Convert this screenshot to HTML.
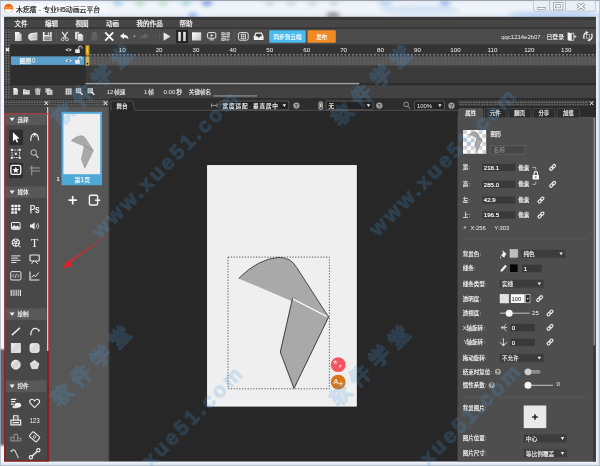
<!DOCTYPE html>
<html><head><meta charset="utf-8"><title>Mugeda</title>
<style>
html,body{margin:0;padding:0;background:#eef3f9;}
body{width:600px;height:466px;overflow:hidden;font-family:"Liberation Sans","Noto Sans CJK SC",sans-serif;}
svg{display:block;font-family:"Liberation Sans","Noto Sans CJK SC",sans-serif;filter:blur(0.45px);}
</style></head><body>
<svg width="600" height="466" viewBox="0 0 600 466">
<defs>
<linearGradient id="gTitle" x1="0" y1="0" x2="0" y2="1">
 <stop offset="0" stop-color="#e2eaf5"/><stop offset="0.3" stop-color="#f1f5fb"/><stop offset="0.75" stop-color="#eef3f9"/><stop offset="1" stop-color="#e0e8f2"/>
</linearGradient>
<linearGradient id="gLeft" x1="0" y1="0" x2="0" y2="1">
 <stop offset="0" stop-color="#f4f7fb"/><stop offset="0.737" stop-color="#f2f6fb"/><stop offset="0.743" stop-color="#56626f"/><stop offset="0.95" stop-color="#5a6673"/><stop offset="0.958" stop-color="#f0f4f9"/><stop offset="1" stop-color="#f4f7fb"/>
</linearGradient>
<linearGradient id="gIcon" x1="0" y1="0" x2="1" y2="1">
 <stop offset="0" stop-color="#ffffff"/><stop offset="1" stop-color="#bdbdbd"/>
</linearGradient>
<linearGradient id="gIcon2" x1="0" y1="0" x2="1" y2="1">
 <stop offset="0" stop-color="#f4f4f4"/><stop offset="0.5" stop-color="#d4d4d4"/><stop offset="1" stop-color="#e6e6e6"/>
</linearGradient>
<pattern id="pDots" width="2.6" height="2.6" patternUnits="userSpaceOnUse">
 <rect width="2.6" height="2.6" fill="#3a3a3a"/><rect x="0.3" y="0.3" width="1.3" height="1.3" fill="#858585"/>
</pattern>
<pattern id="pFrames" width="3.69" height="10" patternUnits="userSpaceOnUse" x="85.3">
 <rect width="3.69" height="10" fill="#5b5b5b"/><rect x="0" y="0" width="0.8" height="10" fill="#4f4f4f"/>
</pattern>
<pattern id="pRuler" width="3.69" height="1.2" patternUnits="userSpaceOnUse" x="85.3">
 <rect x="1.1" y="0.1" width="1.5" height="1" fill="#d2d2d2"/>
</pattern>
<pattern id="pChk" width="7.74" height="7.94" patternUnits="userSpaceOnUse" x="463" y="130">
 <rect width="7.74" height="7.94" fill="#ffffff"/><rect width="3.87" height="3.97" fill="#d2d2d2"/><rect x="3.87" y="3.97" width="3.87" height="3.97" fill="#d2d2d2"/>
</pattern>
<pattern id="pChk2" width="2.4" height="2.4" patternUnits="userSpaceOnUse">
 <rect width="2.4" height="2.4" fill="#ffffff"/><rect width="1.2" height="1.2" fill="#c4c4c4"/><rect x="1.2" y="1.2" width="1.2" height="1.2" fill="#c4c4c4"/>
</pattern>
<filter id="fBlur" x="-5%" y="-5%" width="110%" height="110%"><feGaussianBlur stdDeviation="0.35"/></filter>
<filter id="fBlur2" x="-20%" y="-20%" width="140%" height="140%"><feGaussianBlur stdDeviation="2.2"/></filter>
</defs>
<rect x="0" y="0" width="600" height="466" fill="#eef3f9"/>
<rect x="0" y="0" width="600" height="17" fill="url(#gTitle)"/>
<g filter="url(#fBlur2)" opacity="0.6"><ellipse cx="118" cy="3" rx="5" ry="2.4" fill="#6fb0da"/><ellipse cx="140" cy="3" rx="5" ry="2.4" fill="#8fca9a"/><ellipse cx="163" cy="3" rx="5" ry="2.4" fill="#9fd3a5"/><ellipse cx="186" cy="3" rx="5" ry="2.4" fill="#7fc0c8"/><ellipse cx="207" cy="3.2" rx="5.5" ry="2.6" fill="#2f66cc"/><ellipse cx="193" cy="15.4" rx="4.5" ry="2.2" fill="#3f78e0"/><ellipse cx="333" cy="15" rx="7" ry="2.6" fill="#3a3a3a"/><ellipse cx="270" cy="3" rx="5" ry="2.2" fill="#b5bec9"/><ellipse cx="291" cy="3" rx="5" ry="2.2" fill="#b5bec9"/><ellipse cx="312" cy="3" rx="5" ry="2.2" fill="#b5bec9"/><ellipse cx="334" cy="3" rx="5" ry="2.2" fill="#b5bec9"/><ellipse cx="385" cy="3" rx="7" ry="2.6" fill="#8db9e8"/><ellipse cx="445" cy="3" rx="6" ry="2.6" fill="#4f8fe0"/><ellipse cx="420" cy="10" rx="40" ry="5" fill="#c4d8ef"/><ellipse cx="555" cy="14.6" rx="48" ry="3.2" fill="#94bdf0"/><ellipse cx="58" cy="9" rx="50" ry="5" fill="#ffffff"/></g>
<rect x="0" y="17" width="4.2" height="449" fill="url(#gLeft)"/>
<rect x="596" y="17" width="4" height="449" fill="#eaf0f7"/>
<rect x="0" y="461.3" width="600" height="4.7" fill="#eef3f9"/>
<rect x="597.6" y="17" width="2.4" height="449" fill="#d5e3f3"/>
<rect x="0" y="463.4" width="600" height="2.6" fill="#dbe7f4"/>
<rect x="0" y="0" width="600" height="0.8" fill="#8d9299"/>
<rect x="0" y="0" width="0.7" height="466" fill="#aab0b8"/>
<rect x="599.3" y="0" width="0.7" height="466" fill="#aab0b8"/>
<rect x="0" y="465.3" width="600" height="0.7" fill="#aab0b8"/>
<rect x="4.2" y="16.9" width="591.8" height="444.4" fill="#3c3c3c"/>
<rect x="4.2" y="16.9" width="591.8" height="3.1" fill="#3a3a3a"/>
<rect x="4.2" y="20" width="591.8" height="7.6" fill="#464646"/>
<rect x="4.2" y="27.6" width="591.8" height="1.3" fill="#343434"/>
<rect x="4.2" y="28.9" width="591.8" height="15.7" fill="#4c4c4c"/>
<rect x="4.2" y="44.6" width="591.8" height="11.4" fill="#343434"/>
<rect x="4.2" y="56" width="591.8" height="29" fill="#3a3a3a"/>
<rect x="4.2" y="85" width="591.8" height="14.4" fill="#424242"/>
<rect x="4.2" y="99.4" width="591.8" height="0.9" fill="#2c2c2c"/>
<circle cx="8.6" cy="8.2" r="4.5" fill="#f26a12"/>
<path d="M4.7 8.8 Q8.6 9.9 12.5 8.7 Q12.1 12.6 8.6 12.9 Q5.1 12.6 4.7 8.8Z" fill="#ffffff"/>
<path d="M5 7.6 Q8.6 8.5 12.2 7.4" fill="none" stroke="#ffd0a8" stroke-width="0.55"/>
<text x="16" y="11.78" font-size="6.9" fill="#1a1a1a" stroke="#1a1a1a" stroke-width="0.18">木疙瘩</text>
<text x="38.77" y="11.78" font-size="6.9" fill="#1a1a1a" stroke="#1a1a1a" stroke-width="0.11">-</text>
<text x="43.23" y="11.78" font-size="6.9" fill="#1a1a1a" stroke="#1a1a1a" stroke-width="0.18">专业H5动画云平台</text>
<path d="M533.5 0.8 V9.5 Q533.5 11.2 535.2 11.2 H547.8 Q549.5 11.2 549.5 9.5 V0.8" fill="#eaf0f7" stroke="#a3adbb" stroke-width="0.6" opacity="0.9"/>
<path d="M549.5 0.8 V9.5 Q549.5 11.2 551.2 11.2 H563.8 Q565.5 11.2 565.5 9.5 V0.8" fill="#eaf0f7" stroke="#a3adbb" stroke-width="0.6" opacity="0.9"/>
<path d="M565.5 0.8 V9.5 Q565.5 11.2 567.2 11.2 H593.8 Q595.5 11.2 595.5 9.5 V0.8" fill="#eaf0f7" stroke="#a3adbb" stroke-width="0.6" opacity="0.9"/>
<rect x="537.8" y="7.4" width="7.5" height="2.2" fill="#fdfdfd" stroke="#6a7380" stroke-width="0.55"/>
<rect x="554.3" y="3.7" width="7.6" height="5.2" fill="none" stroke="#6a7380" stroke-width="2.5"/>
<rect x="554.3" y="3.7" width="7.6" height="5.2" fill="none" stroke="#fdfdfd" stroke-width="1.5"/>
<path d="M577.5 3.6 L584.5 9.4 M584.5 3.6 L577.5 9.4" fill="none" stroke="#6a7380" stroke-width="2.8"/>
<path d="M577.5 3.6 L584.5 9.4 M584.5 3.6 L577.5 9.4" fill="none" stroke="#fdfdfd" stroke-width="1.7"/>
<text x="14.4" y="25.76" font-size="6.55" fill="#f2f2f2" stroke="#f2f2f2" stroke-width="0.23">文件</text>
<text x="45" y="25.76" font-size="6.55" fill="#f2f2f2" stroke="#f2f2f2" stroke-width="0.23">编辑</text>
<text x="75.5" y="25.76" font-size="6.55" fill="#f2f2f2" stroke="#f2f2f2" stroke-width="0.23">视图</text>
<text x="106" y="25.76" font-size="6.55" fill="#f2f2f2" stroke="#f2f2f2" stroke-width="0.23">动画</text>
<text x="136.5" y="25.76" font-size="6.55" fill="#f2f2f2" stroke="#f2f2f2" stroke-width="0.23">我的作品</text>
<text x="179.5" y="25.76" font-size="6.55" fill="#f2f2f2" stroke="#f2f2f2" stroke-width="0.23">帮助</text>
<rect x="4.6" y="29.5" width="5.4" height="68.5" fill="url(#pDots)"/>
<path d="M15 32 H19.3 L21.6 34.3 V41 H15Z" fill="url(#gIcon)"/>
<path d="M19.3 32 V34.3 H21.6Z" fill="#9a9a9a"/>
<path d="M28.3 35 L30.5 33.2 L37.4 32.2 V40.2 L30.4 40.8 L28.3 38.4Z" fill="url(#gIcon)"/>
<path d="M30.6 35.2 H37.4 M30.6 37.4 H37.4" fill="none" stroke="#8a8a8a" stroke-width="0.5"/>
<path d="M42.9 32.1 H51.8 V41 H42.9Z" fill="url(#gIcon)"/>
<rect x="44.6" y="32.1" width="5.4" height="2.9" fill="#555555"/>
<rect x="47.9" y="32.5" width="1.2" height="2.1" fill="#e8e8e8"/>
<rect x="44.3" y="36.6" width="6.1" height="3.6" fill="#6a6a6a"/>
<path d="M44.3 37.8 H50.4 M44.3 39 H50.4" fill="none" stroke="#e0e0e0" stroke-width="0.5"/>
<rect x="56.2" y="31" width="0.6" height="11" fill="#5e5e5e"/>
<path d="M62 31.8 L66.2 38.2 M67.6 31.8 L63.4 38.2" fill="none" stroke="#e4e4e4" stroke-width="1.2"/>
<circle cx="62.7" cy="39.3" r="1.4" fill="none" stroke="#d8d8d8" stroke-width="0.9"/>
<circle cx="66.9" cy="39.3" r="1.4" fill="none" stroke="#d8d8d8" stroke-width="0.9"/>
<path d="M75 31.8 H79.2 V39.2 H75Z" fill="#d9d9d9"/>
<path d="M77.6 33.4 H81.4 L83.4 35.4 V41 H77.6Z" fill="url(#gIcon)" stroke="#4a4a4a" stroke-width="0.5"/>
<rect x="91.5" y="33" width="5.8" height="7.8" fill="#5f5f5f" rx="0.6"/>
<rect x="93" y="32" width="2.8" height="1.8" fill="#6a6a6a" rx="0.4"/>
<path d="M105.2 32.3 L113.2 40.6 M113.2 32.3 L105.2 40.6" fill="none" stroke="#f8f8f8" stroke-width="1.8"/>
<path d="M120 36 L124 32.9 V34.8 Q128.2 35 128.4 39.2 Q126.6 37.2 124 37.4 V39.2Z" fill="#f2f2f2"/>
<path d="M133.3 35.8 H135.7 L134.5 37.3Z" fill="#c8c8c8"/>
<path d="M148.4 36 L144.4 32.9 V34.8 Q140.2 35 140 39.2 Q141.8 37.2 144.4 37.4 V39.2Z" fill="#636363"/>
<path d="M153.9 35.8 H156.1 L155 37.3Z" fill="#6a6a6a"/>
<rect x="159" y="31" width="0.6" height="11" fill="#5e5e5e"/>
<path d="M163.6 32.4 L170.8 36.6 L163.6 40.8Z" fill="url(#gIcon)"/>
<rect x="176" y="29.8" width="12" height="13.4" fill="#232323" rx="0.8"/>
<rect x="178.3" y="31.9" width="2.6" height="9.2" fill="url(#gIcon)"/>
<rect x="183.2" y="31.9" width="2.6" height="9.2" fill="url(#gIcon)"/>
<rect x="192" y="32.3" width="9.2" height="8.2" fill="url(#gIcon)"/>
<rect x="207.6" y="32.6" width="8.2" height="5.6" fill="none" rx="1" stroke="#e6e6e6" stroke-width="1"/>
<path d="M210.6 33.9 L213.4 35.4 L210.6 36.9Z" fill="#e6e6e6"/>
<path d="M211.7 38.4 V39.6 M209.3 39.9 H214.1" fill="none" stroke="#dcdcdc" stroke-width="0.9"/>
<rect x="221.4" y="32.3" width="3.2" height="3.2" fill="#dedede"/>
<rect x="222.4" y="33.3" width="1.2" height="1.2" fill="#4a4a4a"/>
<rect x="226.6" y="32.3" width="3.2" height="3.2" fill="#dedede"/>
<rect x="227.6" y="33.3" width="1.2" height="1.2" fill="#4a4a4a"/>
<rect x="221.4" y="37.6" width="3.2" height="3.2" fill="#dedede"/>
<rect x="222.4" y="38.6" width="1.2" height="1.2" fill="#4a4a4a"/>
<path d="M225.3 32.5 V35.2 M221.6 36.5 H229.6 M226.6 37.8 H229.6 M227.6 38.8 V40.8 M225.6 39.8 H229.8 M225.4 36.2 V40.6" fill="none" stroke="#cfcfcf" stroke-width="0.8"/>
<rect x="234.3" y="31" width="0.6" height="11" fill="#5e5e5e"/>
<rect x="238.4" y="32.6" width="9.8" height="7.6" fill="none" rx="1.8" stroke="#e4e4e4" stroke-width="1"/>
<rect x="241.3" y="34.3" width="4.2" height="4.4" fill="none" stroke="#e4e4e4" stroke-width="0.8"/>
<path d="M243.4 34.3 V38.7 M241.3 36.4 H245.5" fill="none" stroke="#dcdcdc" stroke-width="0.6"/>
<path d="M253.8 36.4 L255.6 32.6 H261.8 L263.6 36.4 V40 H253.8Z" fill="#efefef"/>
<path d="M255.4 36.2 L256.4 33.8 H261 L262 36.2 H260.2 L259.4 37.6 H258 L257.2 36.2Z" fill="#3a3a3a"/>
<rect x="269.2" y="30.2" width="36.6" height="12.6" fill="#4ab9ee" rx="1.3"/>
<text x="273.5" y="38.52" font-size="5.6" fill="#ffffff" stroke="#ffffff" stroke-width="0.115">同步到云端</text>
<rect x="307.5" y="30.2" width="28.3" height="12.6" fill="#f28a24" rx="1.3"/>
<text x="315.9" y="38.55" font-size="5.7" fill="#ffffff" stroke="#ffffff" stroke-width="0.115">发布</text>
<text x="501.3" y="38.74" font-size="5.95" fill="#f0f0f0" text-anchor="start">qqc1214e2b07</text>
<text x="541.8" y="38.6" font-size="6.1" fill="#d0d0d0" text-anchor="start">&#183;</text>
<text x="546.5" y="38.61" font-size="5.85" fill="#f0f0f0" stroke="#f0f0f0" stroke-width="0.138">已登录</text>
<path d="M567.6 32.3 L571.4 33.2 V41 L567.6 40.2Z" fill="#f2f2f2"/>
<rect x="571.4" y="33.2" width="2.4" height="7" fill="none" stroke="#e0e0e0" stroke-width="0.7"/>
<path d="M574.4 35 L576.6 36.6 L574.4 38.2Z" fill="#f2f2f2"/>
<g fill="none" stroke="#f0f0f0" stroke-width="1.35"><path d="M584.2 38.8 A4.7 4.7 0 0 1 586.6 32.4"/><path d="M591.6 33.6 A4.7 4.7 0 0 1 589.2 40.2"/></g>
<path d="M585.6 31 L588.6 32.2 L586.2 34.2Z" fill="#ececec"/>
<path d="M590.2 41.6 L587.2 40.4 L589.6 38.4Z" fill="#ececec"/>
<rect x="586.4" y="34.6" width="3.2" height="3.6" fill="none" stroke="#e0e0e0" stroke-width="0.6"/>
<rect x="10.4" y="44.6" width="74.2" height="40.4" fill="#2e2e2e"/>
<path d="M5.9 48 L9.1 51.3 M9.1 48 L5.9 51.3" fill="none" stroke="#f6f6f6" stroke-width="1.25"/>
<path d="M65.19999999999999 49.8 Q68.6 46.8 72.0 49.8 Q68.6 52.8 65.19999999999999 49.8Z" fill="#c4c4c4"/>
<circle cx="68.6" cy="49.8" r="1.1" fill="#555555"/>
<rect x="75.2" y="49.2" width="4.6" height="3.8" fill="#e8e8e8" rx="0.4"/>
<path d="M78.60000000000001 49.2 V47.800000000000004 A1.7 1.7 0 0 1 82.0 47.800000000000004 V48.6" fill="none" stroke="#e8e8e8" stroke-width="0.9"/>
<rect x="11" y="56.4" width="73.6" height="9" fill="#5c9fca"/>
<rect x="11" y="65" width="73.6" height="0.8" fill="#2e2e2e" stroke-dasharray="1.6 1.4"/>
<line x1="11" y1="65.4" x2="84.6" y2="65.4" stroke="#222222" stroke-width="0.8" stroke-dasharray="1.7 1.5"/>
<text x="19.4" y="63.1" font-size="6.1" fill="#f8f8f8" stroke="#f8f8f8" stroke-width="0.16">图层</text>
<text x="31.9" y="63.17" font-size="6.3" fill="#f4f4f4" text-anchor="start">0</text>
<path d="M65.19999999999999 60.6 Q68.6 57.6 72.0 60.6 Q68.6 63.6 65.19999999999999 60.6Z" fill="#d6e4ee"/>
<circle cx="68.6" cy="60.6" r="1.1" fill="#555555"/>
<rect x="75.2" y="60" width="4.6" height="3.8" fill="#e6eef4" rx="0.4"/>
<path d="M78.60000000000001 60 V58.6 A1.7 1.7 0 0 1 82.0 58.6 V59.4" fill="none" stroke="#e6eef4" stroke-width="0.9"/>
<rect x="84.6" y="44.2" width="0.9" height="41" fill="#262626"/>
<text x="122.2" y="52.03" font-size="6.2" fill="#f2f2f2" text-anchor="middle">10</text>
<text x="159.1" y="52.03" font-size="6.2" fill="#f2f2f2" text-anchor="middle">20</text>
<text x="196" y="52.03" font-size="6.2" fill="#f2f2f2" text-anchor="middle">30</text>
<text x="232.9" y="52.03" font-size="6.2" fill="#f2f2f2" text-anchor="middle">40</text>
<text x="269.8" y="52.03" font-size="6.2" fill="#f2f2f2" text-anchor="middle">50</text>
<text x="306.7" y="52.03" font-size="6.2" fill="#f2f2f2" text-anchor="middle">60</text>
<text x="343.6" y="52.03" font-size="6.2" fill="#f2f2f2" text-anchor="middle">70</text>
<text x="380.5" y="52.03" font-size="6.2" fill="#f2f2f2" text-anchor="middle">80</text>
<text x="417.4" y="52.03" font-size="6.2" fill="#f2f2f2" text-anchor="middle">90</text>
<text x="455.5" y="52.03" font-size="6.2" fill="#f2f2f2" text-anchor="middle">100</text>
<text x="492.4" y="52.03" font-size="6.2" fill="#f2f2f2" text-anchor="middle">110</text>
<text x="529.3" y="52.03" font-size="6.2" fill="#f2f2f2" text-anchor="middle">120</text>
<text x="566.2" y="52.03" font-size="6.2" fill="#f2f2f2" text-anchor="middle">130</text>
<rect x="89.6" y="54.3" width="506.4" height="1.1" fill="url(#pRuler)"/>
<rect x="85.5" y="56.4" width="510.5" height="9" fill="url(#pFrames)"/>
<rect x="85.5" y="65.4" width="510.5" height="1" fill="#444444"/>
<rect x="85.5" y="45.3" width="3.9" height="10.2" fill="#d6a41c"/>
<rect x="86.9" y="46.6" width="1.1" height="6.6" fill="#f0cc50"/>
<rect x="85.5" y="56.5" width="3.9" height="9" fill="#cdb75a"/>
<circle cx="87.4" cy="63.6" r="0.85" fill="#1c1c1c"/>
<rect x="87.1" y="55.4" width="0.7" height="1.2" fill="#d6a41c"/>
<rect x="85.5" y="82.9" width="274" height="1.7" fill="#a3a3a3"/>
<rect x="359.5" y="83" width="236.5" height="1.7" fill="#2d2d2d"/>
<rect x="4.2" y="84.6" width="591.8" height="0.7" fill="#2a2a2a"/>
<path d="M13.4 88 H16.6 L18 89.4 V94.7 H13.4Z" fill="url(#gIcon)"/>
<path d="M23 89.2 H25.4 L26.2 90 H29.7 V94.6 H23Z" fill="#dedede"/>
<path d="M23.6 91.2 H29.2" fill="none" stroke="#777" stroke-width="0.5"/>
<path d="M35.2 89.6 H40.4 L39.9 94.8 H35.7Z" fill="#d2d2d2"/>
<path d="M34.8 89.1 H40.8 M36.8 88.3 H38.8" fill="none" stroke="#e0e0e0" stroke-width="0.8"/>
<path d="M36.8 90.4 V94 M38.8 90.4 V94" fill="none" stroke="#6a6a6a" stroke-width="0.5"/>
<rect x="45.4" y="88.2" width="5" height="4.6" fill="#bdbdbd"/>
<rect x="47" y="89.8" width="5.4" height="5" fill="#e4e4e4"/>
<path d="M47 91.4 H52.4 M47 93 H52.4 M49.6 89.8 V94.8" fill="none" stroke="#777" stroke-width="0.4"/>
<rect x="65.6" y="88.4" width="6" height="6.2" fill="#e0e0e0"/>
<path d="M65.6 90.4 H71.6 M65.6 92.5 H71.6 M67.6 88.4 V94.6 M69.6 88.4 V94.6" fill="none" stroke="#6a6a6a" stroke-width="0.45"/>
<rect x="75.8" y="88.2" width="5.4" height="5" fill="#e0e0e0"/>
<path d="M75.8 89.8 H81.2 M75.8 91.5 H81.2 M77.6 88.2 V93.2 M79.4 88.2 V93.2" fill="none" stroke="#6a6a6a" stroke-width="0.4"/>
<path d="M79.6 92 L82.6 94.8" fill="none" stroke="#efefef" stroke-width="1.4"/>
<rect x="87.6" y="88.2" width="5.4" height="5" fill="#e0e0e0"/>
<path d="M87.6 89.8 H93 M87.6 91.5 H93 M89.4 88.2 V93.2 M91.2 88.2 V93.2" fill="none" stroke="#6a6a6a" stroke-width="0.4"/>
<path d="M91.4 92 L94.4 94.8" fill="none" stroke="#efefef" stroke-width="1.4"/>
<text x="106.7" y="94.36" font-size="6" fill="#f0f0f0" text-anchor="start">12</text>
<text x="114.2" y="94.32" font-size="5.6" fill="#ececec" stroke="#ececec" stroke-width="0.138">帧速</text>
<text x="144" y="94.36" font-size="6" fill="#f0f0f0" text-anchor="start">1</text>
<text x="148.2" y="94.32" font-size="5.6" fill="#ececec" stroke="#ececec" stroke-width="0.138">帧</text>
<text x="163.6" y="94.36" font-size="6" fill="#f0f0f0" text-anchor="start">0.00</text>
<text x="176.4" y="94.32" font-size="5.6" fill="#ececec" stroke="#ececec" stroke-width="0.138">秒</text>
<text x="188.8" y="94.32" font-size="5.6" fill="#ececec" stroke="#ececec" stroke-width="0.138">关键帧名</text>
<rect x="213.4" y="95.6" width="43.6" height="0.7" fill="#c8c8c8"/>
<rect x="4.2" y="100" width="44.4" height="361.3" fill="#484848"/>
<rect x="48.6" y="100" width="60.2" height="361.3" fill="#565656"/>
<rect x="108.8" y="100" width="1.4" height="361.3" fill="#2f2f2f"/>
<rect x="110.2" y="98" width="347.8" height="363.3" fill="#272727"/>
<rect x="110.2" y="98" width="347.8" height="12.2" fill="#2d2d2d"/>
<rect x="458" y="98" width="138" height="363.3" fill="#2b2b2b"/>
<rect x="5" y="100.6" width="41" height="4.9" fill="url(#pDots)"/>
<rect x="50.5" y="100.6" width="52" height="4.9" fill="url(#pDots)"/>
<path d="M44.6 101.2 L48 105 M48 101.2 L44.6 105" fill="none" stroke="#f2f2f2" stroke-width="1"/>
<path d="M103.8 101.2 L107.2 105 M107.2 101.2 L103.8 105" fill="none" stroke="#f2f2f2" stroke-width="1"/>
<rect x="4.2" y="105.6" width="104.6" height="1" fill="#3a3a3a"/>
<rect x="5.2" y="113.7" width="41.4" height="11.4" fill="#585858"/>
<path d="M9.6 117.7 H14.6 L12.1 121.30000000000001Z" fill="#f0f0f0"/>
<text x="17.4" y="121.52" font-size="5.6" fill="#f0f0f0" stroke="#f0f0f0" stroke-width="0.17">选择</text>
<rect x="5.2" y="186.5" width="41.4" height="11.4" fill="#585858"/>
<path d="M9.6 190.5 H14.6 L12.1 194.1Z" fill="#f0f0f0"/>
<text x="17.4" y="194.32" font-size="5.6" fill="#f0f0f0" stroke="#f0f0f0" stroke-width="0.17">媒体</text>
<rect x="5.2" y="308.3" width="41.4" height="11.6" fill="#585858"/>
<path d="M9.6 312.4 H14.6 L12.1 315.99999999999994Z" fill="#f0f0f0"/>
<text x="17.4" y="316.22" font-size="5.6" fill="#f0f0f0" stroke="#f0f0f0" stroke-width="0.17">绘制</text>
<rect x="5.2" y="380.3" width="41.4" height="11.9" fill="#585858"/>
<path d="M9.6 384.55 H14.6 L12.1 388.15Z" fill="#f0f0f0"/>
<text x="17.4" y="388.37" font-size="5.6" fill="#f0f0f0" stroke="#f0f0f0" stroke-width="0.17">控件</text>
<rect x="9" y="129.6" width="14" height="15.4" fill="#2e2e2e"/>
<rect x="9" y="162.8" width="14" height="15.4" fill="#2e2e2e"/>
<g transform="translate(15.8 137.3) scale(1.1)"><path d="M-2.6 -4.6 L-2.6 3.6 L-0.6 1.8 L0.9 4.8 L2.2 4.2 L0.8 1.3 L3.4 1.1Z" fill="#ffffff"/></g>
<g transform="translate(34.6 137.3) scale(1.1)"><path d="M-3.4 3.2 Q-3.6 -3.2 0 -3.2 Q3.6 -3.2 3.6 3" fill="none" stroke="#ececec" stroke-width="1.1"/><circle cx="0" cy="-3" r="1.2" fill="#ececec"/><path d="M-1.4 -0.4 L0 -2 L1.4 -0.4" fill="none" stroke="#ececec" stroke-width="0.7"/></g>
<g transform="translate(15.8 153.8) scale(1.1)"><rect x="-3.4" y="-3.4" width="6.8" height="6.8" fill="none" stroke="#e6e6e6" stroke-width="0.9" stroke-dasharray="1.3 0.9"/><rect x="-4.5" y="-4.5" width="1.8" height="1.8" fill="#f4f4f4"/><rect x="-4.5" y="2.7" width="1.8" height="1.8" fill="#f4f4f4"/><rect x="2.7" y="-4.5" width="1.8" height="1.8" fill="#f4f4f4"/><rect x="2.7" y="2.7" width="1.8" height="1.8" fill="#f4f4f4"/><rect x="-1" y="-1" width="2" height="2" fill="#e6e6e6"/></g>
<g transform="translate(34.6 153.6) scale(1.1)"><circle cx="-0.8" cy="-1" r="2.5" fill="none" stroke="#d4d4d4" stroke-width="0.8"/><path d="M1 0.9 L3.4 3.8" stroke="#d4d4d4" stroke-width="1.1" fill="none"/></g>
<g transform="translate(15.8 169.9) scale(1.1)"><rect x="-4.5" y="-4.1" width="9" height="8.2" rx="1.6" fill="none" stroke="#f8f8f8" stroke-width="1.25"/><path d="M0 -2.8 L0.9 -0.8 L3 -0.6 L1.4 0.7 L1.9 2.8 L0 1.7 L-1.9 2.8 L-1.4 0.7 L-3 -0.6 L-0.9 -0.8Z" fill="#f8f8f8"/></g>
<g transform="translate(34.6 170.4) scale(1.1)"><path d="M-2.6 -4.4 V4.6 M-4.6 -2.2 H4.8 M-2.6 0.5 H4.8" fill="none" stroke="#a4a4a4" stroke-width="0.85"/></g>
<g transform="translate(15.8 209.2) scale(1.1)"><rect x="-4.1" y="-4.1" width="2.3" height="2.3" rx="0.5" fill="#f4f4f4"/><rect x="-4.1" y="-1.15" width="2.3" height="2.3" rx="0.5" fill="#f4f4f4"/><rect x="-4.1" y="1.8" width="2.3" height="2.3" rx="0.5" fill="#f4f4f4"/><rect x="-1.15" y="-4.1" width="2.3" height="2.3" rx="0.5" fill="#f4f4f4"/><rect x="-1.15" y="-1.15" width="2.3" height="2.3" rx="0.5" fill="#f4f4f4"/><rect x="-1.15" y="1.8" width="2.3" height="2.3" rx="0.5" fill="#f4f4f4"/><rect x="1.8" y="-4.1" width="2.3" height="2.3" rx="0.5" fill="#f4f4f4"/><rect x="1.8" y="-1.15" width="2.3" height="2.3" rx="0.5" fill="#f4f4f4"/></g>
<text x="34.6" y="212.6" font-size="10.4" fill="#f2f2f2" stroke="#f2f2f2" stroke-width="0.25" text-anchor="middle" textLength="9.8" lengthAdjust="spacingAndGlyphs">Ps</text>
<g transform="translate(15.8 225.8) scale(1.0)"><rect x="-4.3" y="-3.3" width="8.6" height="6.8" rx="0.6" fill="none" stroke="#f0f0f0" stroke-width="1"/><path d="M-3.8 2.9 L-3.8 1.4 L-1.6 -0.8 L0.2 1 L1.6 -0.4 L3.8 1.6 L3.8 2.9Z" fill="#f0f0f0"/></g>
<g transform="translate(34.6 226) scale(1.1)"><path d="M-4.2 -1.3 H-2.4 L0 -3.4 V3.4 L-2.4 1.3 H-4.2Z" fill="#ececec"/><path d="M1.4 -1.6 Q2.6 0 1.4 1.6 M2.8 -2.8 Q4.8 0 2.8 2.8" fill="none" stroke="#d0d0d0" stroke-width="0.8"/></g>
<g transform="translate(15.8 242.6) scale(1.0)"><circle r="4.2" fill="#f0f0f0"/><circle cx="0" cy="-2.3" r="1" fill="#484848"/><circle cx="2.2" cy="-0.7" r="1" fill="#484848"/><circle cx="1.4" cy="1.9" r="1" fill="#484848"/><circle cx="-1.4" cy="1.9" r="1" fill="#484848"/><circle cx="-2.2" cy="-0.7" r="1" fill="#484848"/><circle r="0.5" fill="#484848"/><path d="M2.6 3.2 L4.8 4.2" stroke="#f0f0f0" stroke-width="1"/></g>
<text x="34.6" y="247" font-size="12.4" font-family="Liberation Serif" fill="#f2f2f2" text-anchor="middle">T</text>
<g transform="translate(15.8 259.2) scale(1.1)"><path d="M-4.2 -3 H4.2 M-4.2 -1 H2 M-4.2 1 H4.2 M-4.2 3 H0.6" fill="none" stroke="#e6e6e6" stroke-width="0.9"/></g>
<g transform="translate(34.6 259.2) scale(1.1)"><rect x="-4.2" y="-3.8" width="8.4" height="5.4" rx="0.6" fill="none" stroke="#ececec" stroke-width="1"/><path d="M-2.8 4.2 L-0.8 1.8 M2.8 4.2 L0.8 1.8" stroke="#ececec" stroke-width="0.9" fill="none"/></g>
<g transform="translate(15.8 275.8) scale(1.1)"><rect x="-4.6" y="-3.8" width="9.2" height="7.6" rx="0.8" fill="none" stroke="#e8e8e8" stroke-width="0.9"/><path d="M-1.5 -1.5 L-2.9 0 L-1.5 1.5 M1.5 -1.5 L2.9 0 L1.5 1.5 M0.6 -1.8 L-0.6 1.8" fill="none" stroke="#e6e6e6" stroke-width="0.7"/></g>
<g transform="translate(34.6 275.8) scale(1.1)"><path d="M-4.2 -3.8 V3.8 H4.4" fill="none" stroke="#ececec" stroke-width="1"/><path d="M-2.8 1.6 L-0.8 -0.6 L0.8 0.6 L3.8 -3" fill="none" stroke="#ececec" stroke-width="0.9"/></g>
<g transform="translate(15.8 292.8) scale(1.1)"><path d="M-4.2 -2.8 V2.8 M4.2 -2.8 V2.8" stroke="#ececec" stroke-width="1"/><path d="M-2.4 -2.8 V2.8 M-0.8 -2.8 V2.8 M0.8 -2.8 V2.8 M2.4 -2.8 V2.8" stroke="#cfcfcf" stroke-width="0.9"/></g>
<g transform="translate(15.8 331.4) scale(1.1)"><path d="M-3.6 3.4 L3.8 -3.4" stroke="#f4f4f4" stroke-width="1.3"/></g>
<g transform="translate(34.6 331.4) scale(1.1)"><path d="M-3.6 3.6 Q-3 -3.6 1.6 -2.6 Q3.4 -2.2 4 -0.4" fill="none" stroke="#ececec" stroke-width="1"/><circle cx="3.8" cy="-0.8" r="0.9" fill="#ececec"/></g>
<g transform="translate(15.8 348) scale(1)"><rect x="-4.5" y="-4.5" width="9" height="9" fill="url(#gIcon2)" stroke="#fafafa" stroke-width="0.7"/></g>
<g transform="translate(34.6 348) scale(1)"><rect x="-4.6" y="-4.5" width="9.2" height="9" rx="2.2" fill="url(#gIcon2)" stroke="#fafafa" stroke-width="0.7"/></g>
<g transform="translate(15.8 364.7) scale(1)"><circle r="4.6" fill="url(#gIcon2)" stroke="#fafafa" stroke-width="0.6"/></g>
<g transform="translate(34.6 364.7) scale(0.92)"><path d="M0 -4.8 L4.8 -1.2 L3 4.3 H-3 L-4.8 -1.2Z" fill="url(#gIcon2)" stroke="#fafafa" stroke-width="0.6"/></g>
<g transform="translate(15.8 403.4) scale(1.1)"><path d="M-4.4 -3.6 H0.4 M-4.4 -1.6 H-0.4 M-4.4 0.6 H-1.8" stroke="#f0f0f0" stroke-width="1.1" fill="none"/><ellipse cx="1.8" cy="1.6" rx="3" ry="2.2" fill="#f0f0f0"/><ellipse cx="-0.6" cy="3.2" rx="2.6" ry="1.2" fill="#dcdcdc"/></g>
<g transform="translate(34.6 403.4) scale(1.1)"><path d="M0 3.8 L-4 -0.2 Q-5.2 -2.2 -3.6 -3.4 Q-1.6 -4.6 0 -2.2 Q1.6 -4.6 3.6 -3.4 Q5.2 -2.2 4 -0.2Z" fill="none" stroke="#f0f0f0" stroke-width="1"/></g>
<g transform="translate(15.8 420.2) scale(1.1)"><path d="M-4.4 0 H4.4 V4.2 H-4.4Z" fill="none" stroke="#f0f0f0" stroke-width="1.1"/><rect x="-3" y="1.6" width="6" height="1.2" fill="#f0f0f0"/><path d="M-2 0 V-4 H2 V0" fill="none" stroke="#f0f0f0" stroke-width="1"/><path d="M-0.8 -2.4 L-0.1 -1.6 L1 -3" fill="none" stroke="#e0e0e0" stroke-width="0.5"/></g>
<text x="34.6" y="423" font-size="7.6" fill="#f0f0f0" text-anchor="middle" textLength="10.4" lengthAdjust="spacingAndGlyphs">123</text>
<g transform="translate(15.8 436.8) scale(1.1)"><path d="M-4.6 3.8 V0.4 H-1.6 V-2.2 H1.6 V1.4 H4.6 V3.8Z M-1.6 0.4 V3.8 M1.6 1.4 V3.8" fill="none" stroke="#a8a8a8" stroke-width="0.7"/></g>
<g transform="translate(34.6 436.8) scale(1.1)"><g transform="rotate(40)"><rect x="-4.2" y="-2.8" width="8.4" height="5.6" rx="0.8" fill="none" stroke="#ececec" stroke-width="1"/><circle r="1.2" fill="none" stroke="#ececec" stroke-width="0.7"/></g></g>
<g transform="translate(15.8 453.8) scale(1.1)"><path d="M-4 -2.6 Q-2.2 -4.6 -0.6 -2.6 L2.4 3.8" fill="none" stroke="#cfcfcf" stroke-width="1"/><circle cx="-4" cy="-2.4" r="0.8" fill="#cfcfcf"/></g>
<g transform="translate(34.6 453.8) scale(1.1)"><path d="M-3.2 3 L3.2 -3" stroke="#f4f4f4" stroke-width="1.2"/><circle cx="-3.4" cy="3.2" r="1.5" fill="#484848" stroke="#f4f4f4" stroke-width="1"/><circle cx="3.4" cy="-3.2" r="1.5" fill="#484848" stroke="#f4f4f4" stroke-width="1"/></g>
<rect x="47" y="107" width="1.3" height="244" fill="#d2cbcb"/>
<rect x="4.5" y="113.4" width="44.1" height="0.9" fill="#c8393b"/>
<rect x="4.3" y="113.4" width="0.9" height="348" fill="#c8393b"/>
<rect x="48" y="113.4" width="0.9" height="238" fill="#d0494c"/>
<rect x="47.2" y="351" width="1.9" height="110" fill="#8e1a1c"/>
<rect x="4.3" y="351" width="1.3" height="110" fill="#8e1a1c"/>
<rect x="4.3" y="460.2" width="44.8" height="1.3" fill="#8e1a1c"/>
<rect x="61.5" y="111.8" width="40.6" height="73.4" fill="#4fa9d6"/>
<rect x="63.4" y="113.8" width="36.8" height="60.4" fill="#efefef"/>
<g transform="translate(11.69 71.73) scale(0.2486)"><path d="M238.7 278.4 Q258 259 278.2 257.4 Q291 257.2 296.6 267.4 L328.6 317 Z" fill="#a9a9a9"/><path d="M238.7 278.4 Q258 259 278.2 257.4 Q291 257.2 296.6 267.4 L328.6 317" fill="none" stroke="#3c3c3c" stroke-width="1.6" stroke-dasharray="2 2"/><path d="M292.5 298.4 L328.6 317 L294 388.4 L280.3 352Z" fill="#a9a9a9" stroke="#2e2e2e" stroke-width="1.6" stroke-dasharray="2 2"/></g>
<text x="74.4" y="181.92" font-size="5.9" fill="#f8f8f8" stroke="#f8f8f8" stroke-width="0.138">第</text>
<text x="80.5" y="182.07" font-size="6.3" fill="#f8f8f8" text-anchor="start" font-weight="bold">1</text>
<text x="84.2" y="181.92" font-size="5.9" fill="#f8f8f8" stroke="#f8f8f8" stroke-width="0.138">页</text>
<text x="56.4" y="181.49" font-size="5.8" fill="#f0f0f0" text-anchor="start" font-weight="bold">1</text>
<path d="M72.7 196 V204.4 M68.5 200.2 H76.9" fill="none" stroke="#f8f8f8" stroke-width="1.7"/>
<rect x="84" y="194.6" width="0.6" height="11" fill="#5f5f5f"/>
<path d="M97.6 198 V196.4 Q97.6 195.2 96.4 195.2 H90.6 Q89.4 195.2 89.4 196.4 V203.8 Q89.4 205 90.6 205 H96.4 Q97.6 205 97.6 203.8 V202.6" fill="none" stroke="#f4f4f4" stroke-width="1.4"/>
<path d="M97.6 197.8 V202.8 M95.1 200.3 H100.3" fill="none" stroke="#f4f4f4" stroke-width="1.4"/>
<path d="M111 110.2 V102 Q111 101 112 101 H131.4 Q132.4 101 132.8 102 L134.8 110.2" fill="#272727" stroke="#5c5c5c" stroke-width="0.7"/>
<rect x="134.8" y="109.9" width="323.2" height="0.7" fill="#5c5c5c"/>
<text x="116.6" y="107.98" font-size="5.5" fill="#f4f4f4" stroke="#f4f4f4" stroke-width="0.16">舞台</text>
<path d="M211.6 103.5 V107.3 M217 103.5 V107.3 M212.6 105.4 H216" fill="none" stroke="#d8d8d8" stroke-width="0.7"/>
<rect x="220" y="101.1" width="68.8" height="8.7" fill="#232323" rx="0.5" stroke="#6a6a6a" stroke-width="0.7"/>
<path d="M282.6 104.14999999999999 H286.0 L284.3 106.94999999999999Z" fill="#f0f0f0"/>
<text x="222.6" y="107.62" font-size="5.6" letter-spacing="0.85" fill="#f4f4f4" stroke="#f4f4f4" stroke-width="0.16">宽度适配</text>
<text x="249" y="107.56" font-size="6" fill="#dcdcdc" text-anchor="start">&#183;</text>
<text x="253" y="107.62" font-size="5.6" letter-spacing="0.85" fill="#f4f4f4" stroke="#f4f4f4" stroke-width="0.16">垂直居中</text>
<circle cx="296.4" cy="105.6" r="3.1" fill="#a2a2a2"/>
<text x="296.4" y="107.6" font-size="5" fill="#2c2c2c" text-anchor="middle" font-weight="bold">?</text>
<rect x="319.1" y="102" width="3.2" height="7.2" fill="none" rx="0.6" stroke="#e8e8e8" stroke-width="0.8"/>
<rect x="319.9" y="103.3" width="1.6" height="4" fill="#cfcfcf"/>
<rect x="326" y="101.1" width="47" height="8.7" fill="#232323" rx="0.5" stroke="#6a6a6a" stroke-width="0.7"/>
<text x="328.4" y="107.57" font-size="5.6" fill="#e8e8e8" stroke="#e8e8e8" stroke-width="0.16">无</text>
<path d="M366.8 104.14999999999999 H370.2 L368.5 106.94999999999999Z" fill="#f0f0f0"/>
<circle cx="379.3" cy="105.6" r="3.1" fill="#a2a2a2"/>
<text x="379.3" y="107.6" font-size="5" fill="#2c2c2c" text-anchor="middle" font-weight="bold">?</text>
<circle cx="406.2" cy="104.4" r="2.3" fill="none" stroke="#a8a8a8" stroke-width="0.8"/>
<path d="M407.8 106.2 L410 108.8" fill="none" stroke="#a8a8a8" stroke-width="1"/>
<rect x="414.6" y="101.1" width="29.8" height="8.7" fill="#232323" rx="0.5" stroke="#6a6a6a" stroke-width="0.7"/>
<text x="417" y="107.67" font-size="5.9" fill="#e8e8e8" text-anchor="start">100%</text>
<path d="M438.2 104.14999999999999 H441.59999999999997 L439.9 106.94999999999999Z" fill="#f0f0f0"/>
<circle cx="451.5" cy="105.7" r="3.1" fill="#a2a2a2"/>
<text x="451.5" y="107.7" font-size="5" fill="#2c2c2c" text-anchor="middle" font-weight="bold">?</text>
<rect x="208.8" y="166.8" width="148.6" height="240.4" fill="#1a1a1a"/>
<rect x="207.6" y="165.6" width="148.7" height="240.5" fill="#efefef" stroke="#fbfbfb" stroke-width="0.9"/>
<g transform="translate(0 0) scale(1)"><path d="M238.7 278.4 Q258 259 278.2 257.4 Q291 257.2 296.6 267.4 L328.6 317 Z" fill="#a9a9a9"/><path d="M238.7 278.4 Q258 259 278.2 257.4 Q291 257.2 296.6 267.4 L328.6 317" fill="none" stroke="#3c3c3c" stroke-width="0.9"/><path d="M292.5 298.4 L328.6 317 L294 388.4 L280.3 352Z" fill="#a9a9a9" stroke="#2e2e2e" stroke-width="0.9"/></g>
<path d="M292.9 298.9 L327.4 316.6" fill="none" stroke="#ffffff" stroke-width="1.3"/>
<rect x="228" y="257.1" width="101.4" height="131.7" fill="none" stroke="#3a3a3a" stroke-width="0.8" stroke-dasharray="1.3 1.5"/>
<circle cx="338.2" cy="364.7" r="7.4" fill="#f2555f"/>
<path d="M335.2 359.6 L335.9 361.3 L337.7 361.4 L336.3 362.5 L336.8 364.3 L335.2 363.3 L333.6 364.3 L334.1 362.5 L332.7 361.4 L334.5 361.3Z" fill="#f8c9cc"/>
<path d="M340.2 364.2 L340.7 365.4 L342 365.5 L341 366.3 L341.3 367.6 L340.2 366.9 L339.1 367.6 L339.4 366.3 L338.4 365.5 L339.7 365.4Z" fill="#f8c9cc"/>
<circle cx="338.2" cy="382.1" r="7.4" fill="#d6761b"/>
<text x="336" y="383.6" font-size="8" fill="#f6dcc0" text-anchor="middle" font-weight="bold">A</text>
<path d="M341 381.4 V386 M338.7 383.7 H343.3" fill="none" stroke="#f6dcc0" stroke-width="1"/>
<path d="M109.6 233.6 L67.4 264.4 L66.2 262.8Z" fill="#e2262a"/>
<path d="M62.3 268.6 L68.6 260.2 L72.4 265.4Z" fill="#ee1c24"/>
<rect x="458.6" y="100.6" width="130" height="4.9" fill="url(#pDots)"/>
<path d="M589.8 101.1 L593.4 105.1 M593.4 101.1 L589.8 105.1" fill="none" stroke="#f4f4f4" stroke-width="1"/>
<rect x="457.5" y="117.6" width="138.5" height="343.7" fill="#4e4e4e"/>
<rect x="457.5" y="117.2" width="138.5" height="0.7" fill="#5e5e5e"/>
<path d="M458.7 118 V109.6 Q458.7 108.6 459.7 108.6 H481.6 Q482.6 108.6 482.6 109.6 V118Z" fill="#4e4e4e" stroke="#646464" stroke-width="0.6"/>
<rect x="459" y="117" width="23.3" height="1.2" fill="#4e4e4e"/>
<text x="465.25" y="115.24" font-size="5.4" fill="#f8f8f8" stroke="#f8f8f8" stroke-width="0.18">属性</text>
<path d="M484.5 117.4 V109.6 Q484.5 108.6 485.5 108.6 H505.2 Q506.2 108.6 506.2 109.6 V117.4" fill="#2c2c2c" stroke="#585858" stroke-width="0.6"/>
<text x="489.95" y="115.24" font-size="5.4" fill="#ececec" stroke="#ececec" stroke-width="0.18">元件</text>
<path d="M508.7 117.4 V109.6 Q508.7 108.6 509.7 108.6 H529.6 Q530.6 108.6 530.6 109.6 V117.4" fill="#2c2c2c" stroke="#585858" stroke-width="0.6"/>
<text x="514.25" y="115.24" font-size="5.4" fill="#ececec" stroke="#ececec" stroke-width="0.18">翻页</text>
<path d="M533 117.4 V109.6 Q533 108.6 534 108.6 H553.6 Q554.6 108.6 554.6 109.6 V117.4" fill="#2c2c2c" stroke="#585858" stroke-width="0.6"/>
<text x="538.4" y="115.24" font-size="5.4" fill="#ececec" stroke="#ececec" stroke-width="0.18">分享</text>
<path d="M557 117.4 V109.6 Q557 108.6 558 108.6 H578.6 Q579.6 108.6 579.6 109.6 V117.4" fill="#2c2c2c" stroke="#585858" stroke-width="0.6"/>
<text x="562.9" y="115.24" font-size="5.4" fill="#ececec" stroke="#ececec" stroke-width="0.18">加载</text>
<rect x="593.6" y="118" width="1.3" height="227.5" fill="#8e8e8e"/>
<rect x="593" y="345.5" width="2.6" height="116" fill="#3a3a3a"/>
<rect x="463" y="130" width="23.2" height="23.8" fill="url(#pChk)"/>
<g transform="translate(433.44 93.64) scale(0.148)"><path d="M238.7 278.4 Q258 259 278.2 257.4 Q291 257.2 296.6 267.4 L328.6 317 Z" fill="#a9a9a9"/><path d="M238.7 278.4 Q258 259 278.2 257.4 Q291 257.2 296.6 267.4 L328.6 317" fill="none" stroke="#3c3c3c" stroke-width="1.6"/><path d="M292.5 298.4 L328.6 317 L294 388.4 L280.3 352Z" fill="#a9a9a9" stroke="#2e2e2e" stroke-width="1.6"/></g>
<text x="490.4" y="136.34" font-size="5.4" fill="#f0f0f0" stroke="#f0f0f0" stroke-width="0.17">图形</text>
<rect x="490.5" y="145.8" width="34.5" height="8.3" fill="#464646" stroke="#686868" stroke-width="0.7"/>
<text x="493.6" y="152.15" font-size="5.7" fill="#8c8c8c" stroke="#8c8c8c" stroke-width="0.09">名称</text>
<text x="462.7" y="169.38" font-size="5.5" fill="#f0f0f0" stroke="#f0f0f0" stroke-width="0.17">宽</text>
<text x="468.5" y="169.49" font-size="5.8" fill="#f0f0f0" text-anchor="start">:</text>
<rect x="482" y="163.5" width="33.6" height="7.8" fill="#393939" stroke="#505050" stroke-width="0.5"/>
<text x="483.8" y="169.7" font-size="6.1" fill="#fafafa" text-anchor="start" stroke="#fafafa" stroke-width="0.16">218.1</text>
<text x="518.2" y="169.52" font-size="5.6" fill="#f0f0f0" stroke="#f0f0f0" stroke-width="0.16">像素</text>
<g transform="translate(552.6 167.4) rotate(-45) scale(0.84)" fill="none" stroke="#ededed" stroke-width="1.35"><rect x="-4.3" y="-1.5" width="4.6" height="3" rx="1.5"/><rect x="-0.3" y="-1.5" width="4.6" height="3" rx="1.5"/></g>
<text x="462.7" y="186.28" font-size="5.5" fill="#f0f0f0" stroke="#f0f0f0" stroke-width="0.17">高</text>
<text x="468.5" y="186.39" font-size="5.8" fill="#f0f0f0" text-anchor="start">:</text>
<rect x="482" y="180.4" width="33.6" height="7.8" fill="#393939" stroke="#505050" stroke-width="0.5"/>
<text x="483.8" y="186.6" font-size="6.1" fill="#fafafa" text-anchor="start" stroke="#fafafa" stroke-width="0.16">285.0</text>
<text x="518.2" y="186.42" font-size="5.6" fill="#f0f0f0" stroke="#f0f0f0" stroke-width="0.16">像素</text>
<g transform="translate(552.6 184.3) rotate(-45) scale(0.84)" fill="none" stroke="#ededed" stroke-width="1.35"><rect x="-4.3" y="-1.5" width="4.6" height="3" rx="1.5"/><rect x="-0.3" y="-1.5" width="4.6" height="3" rx="1.5"/></g>
<text x="462.7" y="201.98" font-size="5.5" fill="#f0f0f0" stroke="#f0f0f0" stroke-width="0.17">左</text>
<text x="468.5" y="202.09" font-size="5.8" fill="#f0f0f0" text-anchor="start">:</text>
<rect x="482" y="196.1" width="33.6" height="7.8" fill="#393939" stroke="#505050" stroke-width="0.5"/>
<text x="483.8" y="202.3" font-size="6.1" fill="#fafafa" text-anchor="start" stroke="#fafafa" stroke-width="0.16">42.9</text>
<text x="518.2" y="202.12" font-size="5.6" fill="#f0f0f0" stroke="#f0f0f0" stroke-width="0.16">像素</text>
<g transform="translate(541 200) rotate(-45) scale(0.84)" fill="none" stroke="#ededed" stroke-width="1.35"><rect x="-4.3" y="-1.5" width="4.6" height="3" rx="1.5"/><rect x="-0.3" y="-1.5" width="4.6" height="3" rx="1.5"/></g>
<text x="462.7" y="216.98" font-size="5.5" fill="#f0f0f0" stroke="#f0f0f0" stroke-width="0.17">上</text>
<text x="468.5" y="217.09" font-size="5.8" fill="#f0f0f0" text-anchor="start">:</text>
<rect x="482" y="211.1" width="33.6" height="7.8" fill="#393939" stroke="#505050" stroke-width="0.5"/>
<text x="483.8" y="217.3" font-size="6.1" fill="#fafafa" text-anchor="start" stroke="#fafafa" stroke-width="0.16">196.5</text>
<text x="518.2" y="217.12" font-size="5.6" fill="#f0f0f0" stroke="#f0f0f0" stroke-width="0.16">像素</text>
<g transform="translate(541 215) rotate(-45) scale(0.84)" fill="none" stroke="#ededed" stroke-width="1.35"><rect x="-4.3" y="-1.5" width="4.6" height="3" rx="1.5"/><rect x="-0.3" y="-1.5" width="4.6" height="3" rx="1.5"/></g>
<path d="M532.4 167.4 H535.8 V170.4 M532.4 184.3 H535.8 V181.6" fill="none" stroke="#d8d8d8" stroke-width="0.7"/>
<rect x="532.6" y="174.9" width="6.4" height="4.6" fill="#f6f6f6" rx="0.6"/>
<path d="M534.1 174.9 V173.3 A1.7 1.7 0 0 1 537.5 173.3 V174.9" fill="none" stroke="#f6f6f6" stroke-width="1.1"/>
<rect x="535.3" y="176.3" width="1" height="1.7" fill="#4e4e4e"/>
<path d="M463.4 227.4 H466.4 M464.9 225.9 V228.9" fill="none" stroke="#e0e0e0" stroke-width="0.6"/>
<text x="470.4" y="229.62" font-size="5.9" fill="#ececec" text-anchor="start">X:256</text>
<text x="494.3" y="229.62" font-size="5.9" fill="#ececec" text-anchor="start">Y:303</text>
<rect x="463" y="238.7" width="124" height="0.6" fill="#626262"/>
<text x="462.7" y="255.78" font-size="5.5" fill="#f0f0f0" stroke="#f0f0f0" stroke-width="0.17">背景色</text>
<text x="479.5" y="255.89" font-size="5.8" fill="#f0f0f0" text-anchor="start">:</text>
<path d="M501.2 255.8 L503.6 251.6 L506.4 253.6 L504.2 257.6Z" fill="#efefef"/>
<path d="M502.2 250.6 L504.4 252.2" fill="none" stroke="#efefef" stroke-width="0.8"/>
<path d="M500.6 256.2 Q499.6 258 500.8 258.4 Q501.8 258 500.6 256.2" fill="#efefef"/>
<rect x="510" y="249.6" width="7.6" height="7.6" fill="#bcbcbc" stroke="#e0e0e0" stroke-width="0.5"/>
<rect x="521" y="249.5" width="44.6" height="8.5" fill="#3c3c3c" rx="0.5" stroke="#4a4a4a" stroke-width="0.7"/>
<text x="523.4" y="255.87" font-size="5.6" fill="#e8e8e8" stroke="#e8e8e8" stroke-width="0.16">纯色</text>
<path d="M559.4 252.45 H562.8000000000001 L561.1 255.25Z" fill="#f0f0f0"/>
<text x="462.7" y="270.38" font-size="5.5" fill="#f0f0f0" stroke="#f0f0f0" stroke-width="0.17">线条</text>
<text x="474" y="270.49" font-size="5.8" fill="#f0f0f0" text-anchor="start">:</text>
<path d="M500.4 271.8 L501 269.6 L505.2 264.8 L506.8 266.2 L502.6 271.2Z" fill="#efefef"/>
<rect x="510" y="264.4" width="7.6" height="7.6" fill="#050505"/>
<rect x="522" y="264.4" width="20" height="8" fill="#393939" stroke="#505050" stroke-width="0.5"/>
<text x="523.8" y="270.7" font-size="6.1" fill="#fafafa" text-anchor="start" stroke="#fafafa" stroke-width="0.16">1</text>
<text x="462.7" y="285.78" font-size="5.5" fill="#f0f0f0" stroke="#f0f0f0" stroke-width="0.17">线条类型</text>
<text x="485" y="285.89" font-size="5.8" fill="#f0f0f0" text-anchor="start">:</text>
<rect x="499.5" y="279.5" width="44.3" height="8.5" fill="#3c3c3c" rx="0.5" stroke="#4a4a4a" stroke-width="0.7"/>
<text x="501.9" y="285.87" font-size="5.6" fill="#e8e8e8" stroke="#e8e8e8" stroke-width="0.16">实线</text>
<path d="M537.5999999999999 282.45 H541.0 L539.3 285.25Z" fill="#f0f0f0"/>
<text x="462.7" y="300.68" font-size="5.5" fill="#f0f0f0" stroke="#f0f0f0" stroke-width="0.17">透明度</text>
<text x="479.5" y="300.79" font-size="5.8" fill="#f0f0f0" text-anchor="start">:</text>
<rect x="500" y="294.2" width="8.8" height="8.8" fill="url(#pChk2)" stroke="#e8e8e8" stroke-width="0.5"/>
<rect x="510.8" y="294.2" width="13.8" height="8.8" fill="#fafafa"/>
<text x="511.6" y="300.89" font-size="5.8" fill="#222222" text-anchor="start">100</text>
<rect x="525.4" y="294.4" width="4.6" height="8.4" fill="#2c2c2c" stroke="#e4e4e4" stroke-width="0.6"/>
<path d="M526.6 298 H528.8 L527.7 299.8Z" fill="#f0f0f0"/>
<g transform="translate(539.6 298.6) rotate(-45) scale(0.84)" fill="none" stroke="#ededed" stroke-width="1.35"><rect x="-4.3" y="-1.5" width="4.6" height="3" rx="1.5"/><rect x="-0.3" y="-1.5" width="4.6" height="3" rx="1.5"/></g>
<text x="462.7" y="315.18" font-size="5.5" fill="#f0f0f0" stroke="#f0f0f0" stroke-width="0.17">透视度</text>
<text x="479.5" y="315.29" font-size="5.8" fill="#f0f0f0" text-anchor="start">:</text>
<rect x="500" y="312.7" width="29.6" height="0.9" fill="#d4d4d4"/>
<circle cx="509.2" cy="313.2" r="3.5" fill="#f6f6f6"/>
<text x="532" y="314.83" font-size="6.2" fill="#f0f0f0" text-anchor="start">25</text>
<g transform="translate(550 313) rotate(-45) scale(0.84)" fill="none" stroke="#ededed" stroke-width="1.35"><rect x="-4.3" y="-1.5" width="4.6" height="3" rx="1.5"/><rect x="-0.3" y="-1.5" width="4.6" height="3" rx="1.5"/></g>
<text x="462.7" y="329.69" font-size="5.8" fill="#f0f0f0" text-anchor="start">X</text>
<text x="466.6" y="329.58" font-size="5.5" fill="#f0f0f0" stroke="#f0f0f0" stroke-width="0.17">轴旋转</text>
<text x="483.4" y="329.69" font-size="5.8" fill="#f0f0f0" text-anchor="start">:</text>
<path d="M506.2 324.2 Q501.6 327.6 506.2 331 M501.4 327.6 H507 M503 326 L501.2 327.6 L503 329.2" fill="none" stroke="#ececec" stroke-width="0.8"/>
<rect x="510" y="323.6" width="25" height="8" fill="#393939" stroke="#505050" stroke-width="0.5"/>
<text x="511.8" y="329.9" font-size="6.1" fill="#fafafa" text-anchor="start" stroke="#fafafa" stroke-width="0.16">0</text>
<g transform="translate(550 327.4) rotate(-45) scale(0.84)" fill="none" stroke="#ededed" stroke-width="1.35"><rect x="-4.3" y="-1.5" width="4.6" height="3" rx="1.5"/><rect x="-0.3" y="-1.5" width="4.6" height="3" rx="1.5"/></g>
<text x="463.4" y="344.43" font-size="6.2" fill="#e4e4e4" text-anchor="start">Y</text>
<text x="466.6" y="344.18" font-size="5.5" fill="#f0f0f0" stroke="#f0f0f0" stroke-width="0.17">轴旋转</text>
<text x="483.4" y="344.29" font-size="5.8" fill="#f0f0f0" text-anchor="start">:</text>
<path d="M499.8 342.2 Q503.4 347 507 342.2 M503.4 338.2 V346 M501.8 344.4 L503.4 346 L505 344.4" fill="none" stroke="#ececec" stroke-width="0.8"/>
<rect x="510" y="338.2" width="25" height="8" fill="#393939" stroke="#505050" stroke-width="0.5"/>
<text x="511.8" y="344.5" font-size="6.1" fill="#fafafa" text-anchor="start" stroke="#fafafa" stroke-width="0.16">0</text>
<g transform="translate(550 342) rotate(-45) scale(0.84)" fill="none" stroke="#ededed" stroke-width="1.35"><rect x="-4.3" y="-1.5" width="4.6" height="3" rx="1.5"/><rect x="-0.3" y="-1.5" width="4.6" height="3" rx="1.5"/></g>
<text x="462.7" y="359.98" font-size="5.5" fill="#f0f0f0" stroke="#f0f0f0" stroke-width="0.17">拖动旋转</text>
<text x="485" y="360.09" font-size="5.8" fill="#f0f0f0" text-anchor="start">:</text>
<rect x="499.5" y="353.8" width="44.3" height="8.4" fill="#3c3c3c" rx="0.5" stroke="#4a4a4a" stroke-width="0.7"/>
<text x="501.9" y="360.12" font-size="5.6" fill="#e8e8e8" stroke="#e8e8e8" stroke-width="0.16">不允许</text>
<path d="M537.5999999999999 356.7 H541.0 L539.3 359.5Z" fill="#f0f0f0"/>
<text x="462.7" y="373.78" font-size="5.5" fill="#f0f0f0" stroke="#f0f0f0" stroke-width="0.17">结束时复位</text>
<text x="490.5" y="373.89" font-size="5.8" fill="#f0f0f0" text-anchor="start">:</text>
<circle cx="497.8" cy="371.8" r="3" fill="#a6a6a6"/>
<text x="497.8" y="373.8" font-size="5" fill="#2c2c2c" text-anchor="middle" font-weight="bold">?</text>
<rect x="524.6" y="370" width="16" height="3.7" fill="#8c8c8c" rx="1.85"/>
<circle cx="528" cy="371.8" r="3.4" fill="#cfcfcf"/>
<text x="462.7" y="387.18" font-size="5.5" fill="#f0f0f0" stroke="#f0f0f0" stroke-width="0.17">惯性系数</text>
<text x="485" y="387.29" font-size="5.8" fill="#f0f0f0" text-anchor="start">:</text>
<circle cx="491.6" cy="385.2" r="3" fill="#a6a6a6"/>
<text x="491.6" y="387.2" font-size="5" fill="#2c2c2c" text-anchor="middle" font-weight="bold">?</text>
<rect x="528" y="384.8" width="25" height="0.9" fill="#cfcfcf"/>
<circle cx="528" cy="385.2" r="3.5" fill="#f6f6f6"/>
<text x="556.4" y="386.43" font-size="6.2" fill="#f0f0f0" text-anchor="start">0</text>
<rect x="463" y="396.8" width="124" height="0.6" fill="#626262"/>
<text x="462.7" y="410.18" font-size="5.5" fill="#f0f0f0" stroke="#f0f0f0" stroke-width="0.17">背景图片</text>
<text x="485" y="410.29" font-size="5.8" fill="#f0f0f0" text-anchor="start">:</text>
<rect x="523.7" y="405.5" width="22.6" height="22.6" fill="#e9e9e9"/>
<path d="M535 414.2 V419.8 M532.2 417 H537.8" fill="none" stroke="#262626" stroke-width="1.5"/>
<text x="462.7" y="440.18" font-size="5.5" fill="#f0f0f0" stroke="#f0f0f0" stroke-width="0.17">图片位置</text>
<text x="485" y="440.29" font-size="5.8" fill="#f0f0f0" text-anchor="start">:</text>
<rect x="523.7" y="434.2" width="43.3" height="8.4" fill="#3c3c3c" rx="0.5" stroke="#4a4a4a" stroke-width="0.7"/>
<text x="526.1" y="440.52" font-size="5.6" fill="#e8e8e8" stroke="#e8e8e8" stroke-width="0.16">中心</text>
<path d="M560.8 437.09999999999997 H564.2 L562.5 439.9Z" fill="#f0f0f0"/>
<text x="462.7" y="455.18" font-size="5.5" fill="#f0f0f0" stroke="#f0f0f0" stroke-width="0.17">图片尺寸</text>
<text x="485" y="455.29" font-size="5.8" fill="#f0f0f0" text-anchor="start">:</text>
<rect x="523.7" y="449.2" width="43.3" height="8.4" fill="#3c3c3c" rx="0.5" stroke="#4a4a4a" stroke-width="0.7"/>
<text x="526.1" y="455.52" font-size="5.6" fill="#e8e8e8" stroke="#e8e8e8" stroke-width="0.16">等比例覆盖</text>
<path d="M560.8 452.09999999999997 H564.2 L562.5 454.9Z" fill="#f0f0f0"/>
<g transform="translate(61.6 395) rotate(-44.5)" opacity="0.2"><text x="-10.25" y="7.38" font-size="20.5" letter-spacing="6.89" fill="#4a9be0" stroke="#4a9be0" stroke-width="2.1" stroke-linejoin="round">软件学堂</text></g>
<g transform="translate(63.1 114.5) rotate(-44.5)" opacity="0.2"><text x="-10.25" y="7.38" font-size="20.5" letter-spacing="6.89" fill="#4a9be0" stroke="#4a9be0" stroke-width="2.1" stroke-linejoin="round">软件学堂</text></g>
<g transform="translate(340.6 395) rotate(-44.5)" opacity="0.2"><text x="-10.25" y="7.38" font-size="20.5" letter-spacing="6.89" fill="#4a9be0" stroke="#4a9be0" stroke-width="2.1" stroke-linejoin="round">软件学堂</text></g>
<g transform="translate(342.1 114.5) rotate(-44.5)" opacity="0.2"><text x="-10.25" y="7.38" font-size="20.5" letter-spacing="6.89" fill="#4a9be0" stroke="#4a9be0" stroke-width="2.1" stroke-linejoin="round">软件学堂</text></g>
<g transform="translate(102 229.6) rotate(-45)" opacity="0.2"><text x="-8.2" y="5.5" font-size="21" font-weight="bold" letter-spacing="2.85" fill="#4a9be0" stroke="#4a9be0" stroke-width="1" stroke-linejoin="round">www.xue51.com</text></g>
<g transform="translate(379.6 227.6) rotate(-45)" opacity="0.2"><text x="-8.2" y="5.5" font-size="21" font-weight="bold" letter-spacing="2.85" fill="#4a9be0" stroke="#4a9be0" stroke-width="1" stroke-linejoin="round">www.xue51.com</text></g>
<g transform="translate(106.3 505.1) rotate(-45)" opacity="0.2"><text x="-8.2" y="5.5" font-size="21" font-weight="bold" letter-spacing="2.85" fill="#4a9be0" stroke="#4a9be0" stroke-width="1" stroke-linejoin="round">www.xue51.com</text></g>
<g transform="translate(383.9 503.1) rotate(-45)" opacity="0.2"><text x="-8.2" y="5.5" font-size="21" font-weight="bold" letter-spacing="2.85" fill="#4a9be0" stroke="#4a9be0" stroke-width="1" stroke-linejoin="round">www.xue51.com</text></g>
</svg>
</body></html>
